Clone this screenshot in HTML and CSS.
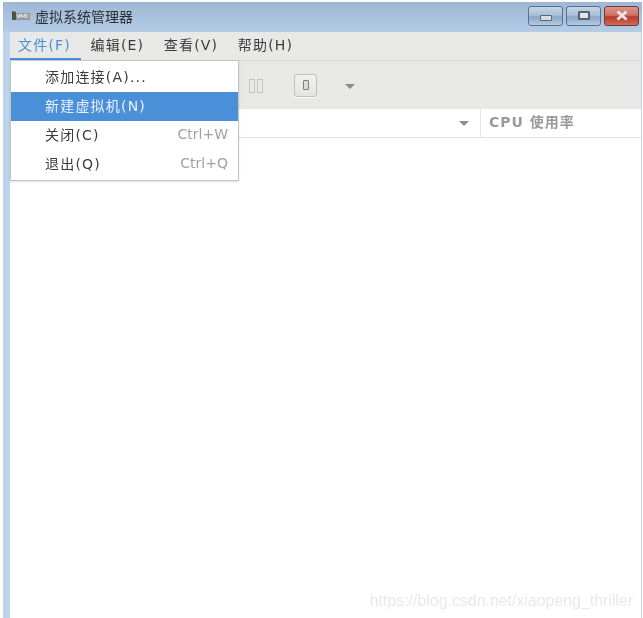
FILE: index.html
```html
<!DOCTYPE html>
<html lang="zh">
<head>
<meta charset="utf-8">
<title>虚拟系统管理器</title>
<link rel="stylesheet" href="styles.css">
</head>
<body>
<div class="window">
  <header class="titlebar">
    <svg class="app-icon" width="18" height="10" viewBox="0 0 18 10"><rect x="1" y="2" width="17" height="7" fill="#9a9a9a"/><path d="M0 0l4 1v8H0z" fill="#4f4f4f"/><path d="M5 3l1.5 4L8 3M9 7V3l2 3 2-3v4M15 3v4" fill="none" stroke="#ececec" stroke-width="1"/></svg>
    <span class="title">虚拟系统管理器</span>
    <div class="controls">
      <div class="wbtn"><span class="min-glyph"></span></div>
      <div class="wbtn"><span class="max-glyph"></span></div>
      <div class="wbtn close"><svg width="14" height="11" viewBox="0 0 14 11"><path d="M2.5 1.5l9 8M11.5 1.5l-9 8" stroke="#e9e6e4" stroke-width="3" fill="none"/></svg></div>
    </div>
  </header>
  <div class="client">
    <nav class="menubar">
      <span class="menu active">文件(F)</span>
      <span class="menu">编辑(E)</span>
      <span class="menu">查看(V)</span>
      <span class="menu">帮助(H)</span>
    </nav>
    <div class="toolbar">
      <svg class="pause" width="15" height="14" viewBox="0 0 15 14"><rect x="0.5" y="0.5" width="5" height="13" fill="none" stroke="#c6c6c4"/><rect x="8.5" y="0.5" width="5" height="13" fill="none" stroke="#c6c6c4"/></svg>
      <div class="stop"><span class="stop-glyph"></span></div>
      <span class="arrow tb-arrow"></span>
    </div>
    <div class="headers">
      <div class="col-name"><span class="arrow"></span></div>
      <div class="col-cpu">CPU 使用率</div>
    </div>
    <div class="list"></div>
  </div>
  <div class="dropdown">
    <div class="item"><span>添加连接(A)...</span></div>
    <div class="item selected"><span>新建虚拟机(N)</span></div>
    <div class="item"><span>关闭(C)</span><span class="accel">Ctrl+W</span></div>
    <div class="item"><span>退出(Q)</span><span class="accel">Ctrl+Q</span></div>
  </div>
  <div class="watermark">https://blog.csdn.net/xiaopeng_thriller</div>
</div>
</body>
</html>
```
FILE: styles.css
```css
* { box-sizing: border-box; }
html, body { margin: 0; height: 100%; background: #fff; }
body {
  padding: 2px 1px 0 3px;
  overflow: hidden;
  font-family: "DejaVu Sans", "Noto Sans CJK SC", sans-serif;
}
.window {
  position: relative;
  height: 616px;
  display: flex;
  flex-direction: column;
  background: #bdd4ec;
  padding: 0 1px 0 7px;
  filter: blur(0.45px);
}
.titlebar {
  height: 30px;
  margin: 0 -1px 0 -7px;
  display: flex;
  align-items: center;
  padding: 0 3px 0 9px;
  background: linear-gradient(#9db7d5, #b4cce6);
}
.app-icon { margin-top: -3px; flex: none; }
.title {
  margin-left: 5px;
  margin-top: -2px;
  font-size: 14px;
  color: #2d3034;
}
.controls {
  margin-left: auto;
  margin-top: -3px;
  display: flex;
  gap: 3px;
}
.wbtn {
  width: 35px;
  height: 20px;
  border: 1px solid #5e6f88;
  border-radius: 3px;
  display: flex;
  align-items: center;
  justify-content: center;
  background: linear-gradient(#c3d4e8 0, #a9c0da 45%, #8aa6c6 55%, #b3cbe2 100%);
}
.wbtn.close {
  border-color: #6d3b3b;
  background: linear-gradient(#dc9287 0, #cf7466 45%, #b8392b 55%, #cf6a58 100%);
}
.min-glyph {
  width: 12px;
  height: 6px;
  margin-top: 5px;
  background: #d8dde2;
  border: 1px solid #5a6674;
  border-radius: 1px;
}
.max-glyph {
  width: 12px;
  height: 9px;
  border: 2px solid #56626f;
  background: #dfe5ea;
  border-radius: 1px;
}
.client {
  flex: 1;
  display: flex;
  flex-direction: column;
  background: #fff;
  color: #3a3d3d;
}
.menubar {
  height: 29px;
  display: flex;
  background: #e8e8e7;
  border-bottom: 1px solid #d8d8d6;
  padding-left: 1px;
}
.menu {
  padding: 0 10px 0 9.5px;
  font-size: 14px;
  letter-spacing: 1.2px;
  line-height: 27px;
  color: #3a3d3d;
  white-space: nowrap;
}
.menu.active {
  color: #4a90d9;
  margin-left: -1px;
  padding-left: 8px;
  border-bottom: 3px solid #4a90d9;
  height: 29px;
}
.toolbar {
  height: 48px;
  display: flex;
  align-items: center;
  background: #e8e8e7;
  padding-left: 239px;
}
.pause { margin-top: 1px; flex: none; }
.stop {
  margin-left: 30px;
  width: 23px;
  height: 23px;
  border: 1px solid #bfbfbd;
  border-radius: 3px;
  background: linear-gradient(#f1f1f0, #e4e4e3);
  box-shadow: 0 1px 0 #fff;
  display: flex;
  align-items: center;
  justify-content: center;
}
.stop-glyph {
  width: 6px;
  height: 10px;
  background: #dcdcda;
  border: 1px solid #7c7c7c;
  border-radius: 1px;
}
.arrow {
  width: 0;
  height: 0;
  border-left: 5.5px solid transparent;
  border-right: 5.5px solid transparent;
  border-top: 5.5px solid #8b8c8c;
}
.tb-arrow { margin-left: 28px; margin-top: 2px; }
.headers {
  height: 29px;
  display: flex;
  background: #fff;
  border-bottom: 1px solid #e6e6e6;
}
.col-name {
  width: 471px;
  display: flex;
  align-items: center;
  justify-content: flex-end;
  padding-right: 11px;
  border-right: 1px solid #e6e6e6;
}
.col-cpu {
  flex: 1;
  padding-left: 8px;
  font-size: 14px;
  font-weight: 700;
  line-height: 27px;
  letter-spacing: 1px;
  color: #98999a;
  white-space: nowrap;
}
.list { flex: 1; background: #fff; }
.dropdown {
  position: absolute;
  left: 7px;
  top: 58px;
  width: 229px;
  background: #fff;
  border: 1px solid #c4c4c2;
  padding: 2px 0 0;
  height: 121px;
  box-shadow: 0 1px 2px rgba(0,0,0,0.12);
}
.item {
  height: 29px;
  display: flex;
  justify-content: space-between;
  align-items: center;
  padding: 0 10px 3px 34px;
  font-size: 14px;
  letter-spacing: 1.2px;
  color: #3a3d3d;
  white-space: nowrap;
}
.item.selected { background: #4a90d9; color: #eaf2fb; }
.accel { color: #a0a1a1; letter-spacing: 0; }
.watermark {
  position: absolute;
  right: 9px;
  bottom: 8px;
  font-family: "Liberation Sans", sans-serif;
  font-size: 15.9px;
  color: #e9e9e9;
  white-space: nowrap;
}
```
